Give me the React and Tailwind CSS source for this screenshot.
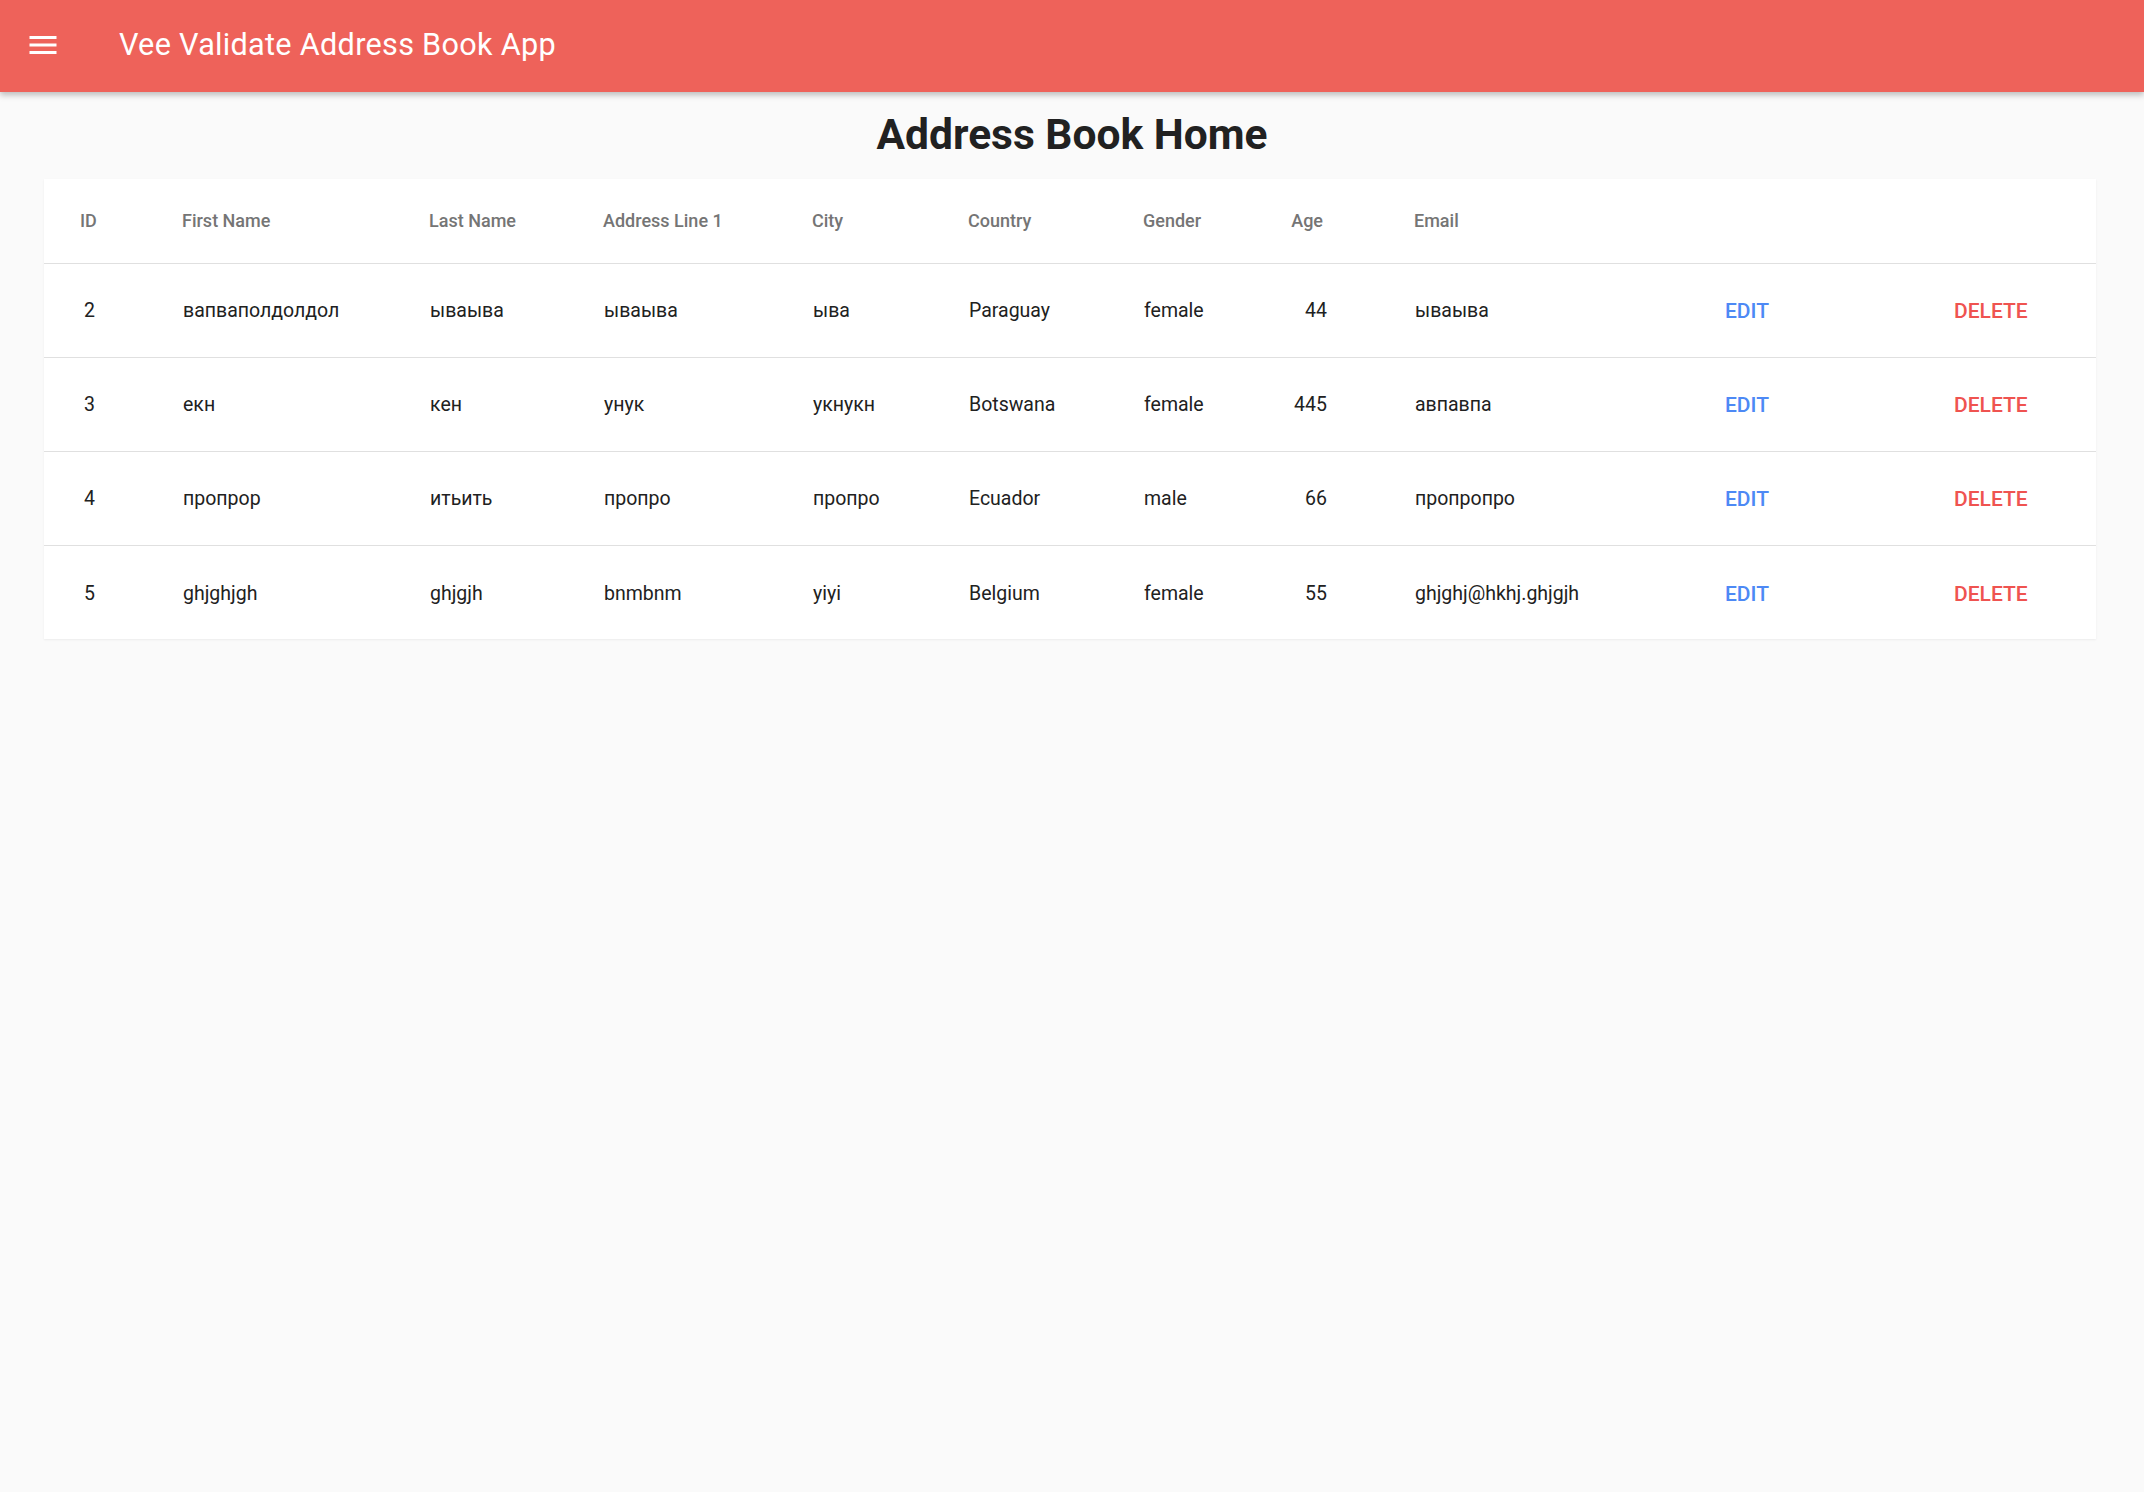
import React from 'react';

const contacts = [
  { id: 2, firstName: 'вапваполдолдол', lastName: 'ываыва', address: 'ываыва', city: 'ыва', country: 'Paraguay', gender: 'female', age: 44, email: 'ываыва' },
  { id: 3, firstName: 'екн', lastName: 'кен', address: 'унук', city: 'укнукн', country: 'Botswana', gender: 'female', age: 445, email: 'авпавпа' },
  { id: 4, firstName: 'пропрор', lastName: 'итьить', address: 'пропро', city: 'пропро', country: 'Ecuador', gender: 'male', age: 66, email: 'пропропро' },
  { id: 5, firstName: 'ghjghjgh', lastName: 'ghjgjh', address: 'bnmbnm', city: 'yiyi', country: 'Belgium', gender: 'female', age: 55, email: 'ghjghj@hkhj.ghjgjh' },
];

const MenuIcon = () => (
  <svg viewBox="0 0 24 24" className="w-[36px] h-[36px] fill-white">
    <path d="M3 18h18v-2H3v2zm0-5h18v-2H3v2zm0-7v2h18V6H3z" />
  </svg>
);

const App = () => {
  return (
    <div className="min-h-[1492px] bg-[#fafafa] font-['Roboto',sans-serif]">
      {/* toolbar */}
      <header className="h-[92px] bg-[#ee625a] flex items-center pl-[25px] pb-[3px] shadow-[0_3px_6px_rgba(0,0,0,0.25)] relative z-10">
        <MenuIcon />
        <h1 className="ml-[58px] text-[30.6px] text-white font-normal tracking-[0.3px]">
          Vee Validate Address Book App
        </h1>
      </header>

      <h2 className="mt-[14px] h-[58px] leading-[58px] text-center text-[42.5px] font-bold text-[#212121]">
        Address Book Home
      </h2>

      <div className="ml-[44px] mr-[48px] mt-[15px] bg-white shadow-[0_1px_2px_rgba(0,0,0,0.06)]">
        <table className="w-full table-fixed border-collapse">
          <colgroup>
            <col className="w-[102px]" />
            <col className="w-[247px]" />
            <col className="w-[174px]" />
            <col className="w-[209px]" />
            <col className="w-[156px]" />
            <col className="w-[175px]" />
            <col className="w-[149px]" />
            <col className="w-[122px]" />
            <col className="w-[311px]" />
            <col className="w-[229px]" />
            <col />
          </colgroup>
          <thead>
            <tr className="h-[84px] border-b border-[#e0e0e0] text-[18px] text-[#757575] text-left">
              <th className="pl-[36px] font-medium">ID</th>
              <th className="pl-[36px] font-medium">First Name</th>
              <th className="pl-[36px] font-medium">Last Name</th>
              <th className="pl-[36px] font-medium">Address Line 1</th>
              <th className="pl-[36px] font-medium">City</th>
              <th className="pl-[36px] font-medium">Country</th>
              <th className="pl-[36px] font-medium">Gender</th>
              <th className="pr-[55px] text-right font-medium">Age</th>
              <th className="pl-[36px] font-medium">Email</th>
              <th></th>
              <th></th>
            </tr>
          </thead>
          <tbody>
            {contacts.map((c, i) => (
              <tr
                key={c.id}
                className={`h-[94px] text-[19.5px] text-[#212121] ${i < contacts.length - 1 ? 'border-b border-[#e0e0e0]' : ''}`}
              >
                <td className="pl-[40px] pt-[2px]">{c.id}</td>
                <td className="pl-[37px] pt-[2px]">{c.firstName}</td>
                <td className="pl-[37px] pt-[2px]">{c.lastName}</td>
                <td className="pl-[37px] pt-[2px]">{c.address}</td>
                <td className="pl-[37px] pt-[2px]">{c.city}</td>
                <td className="pl-[37px] pt-[2px]">{c.country}</td>
                <td className="pl-[37px] pt-[2px]">{c.gender}</td>
                <td className="pr-[51px] pt-[2px] text-right">{c.age}</td>
                <td className="pl-[37px] pt-[2px]">{c.email}</td>
                <td className="pl-[36px] pt-[4px]">
                  <button className="text-[21px] font-medium uppercase text-[#4d89f5]">Edit</button>
                </td>
                <td className="pl-[36px] pt-[4px]">
                  <button className="text-[21px] font-medium uppercase text-[#ef5350]">Delete</button>
                </td>
              </tr>
            ))}
          </tbody>
        </table>
      </div>
    </div>
  );
};

export default App;
